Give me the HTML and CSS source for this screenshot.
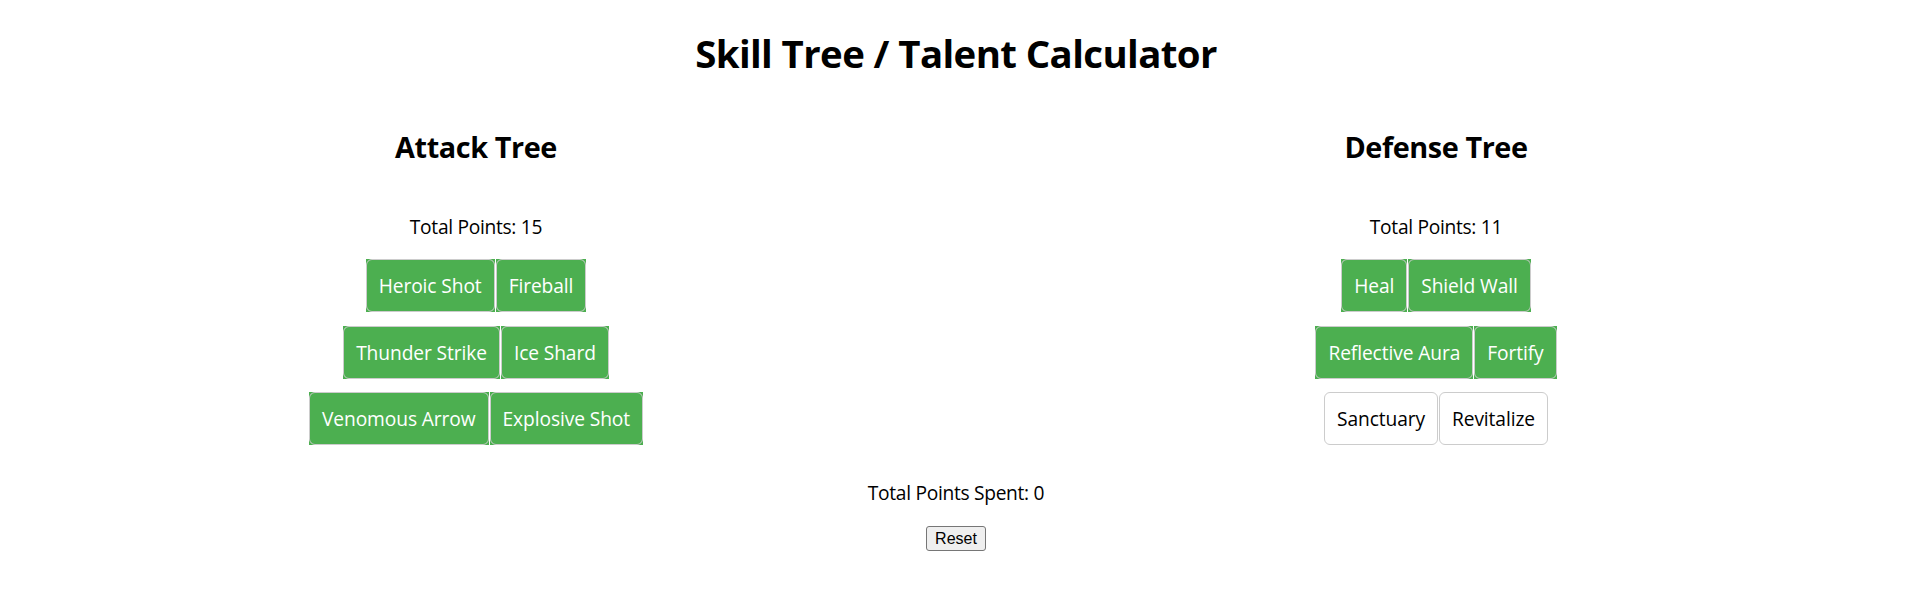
FILE: index.html
```html
<!DOCTYPE html>
<html lang="en">
<head>
<meta charset="utf-8">
<title>Skill Tree / Talent Calculator</title>
<link rel="stylesheet" href="styles.css">
</head>
<body>
<div class="app">
  <h1 class="title">Skill Tree / Talent Calculator</h1>
  <div class="trees">
    <section class="tree">
      <h2 class="tree-title">Attack Tree</h2>
      <p class="points">Total Points: 15</p>
      <div class="rows">
        <div class="row">
          <span class="skill unlocked"><button class="skill-btn">Heroic Shot</button></span>
          <span class="skill unlocked"><button class="skill-btn">Fireball</button></span>
        </div>
        <div class="row">
          <span class="skill unlocked"><button class="skill-btn">Thunder Strike</button></span>
          <span class="skill unlocked"><button class="skill-btn">Ice Shard</button></span>
        </div>
        <div class="row">
          <span class="skill unlocked"><button class="skill-btn">Venomous Arrow</button></span>
          <span class="skill unlocked"><button class="skill-btn">Explosive Shot</button></span>
        </div>
      </div>
    </section>
    <section class="tree">
      <h2 class="tree-title">Defense Tree</h2>
      <p class="points">Total Points: 11</p>
      <div class="rows">
        <div class="row">
          <span class="skill unlocked"><button class="skill-btn">Heal</button></span>
          <span class="skill unlocked"><button class="skill-btn">Shield Wall</button></span>
        </div>
        <div class="row">
          <span class="skill unlocked"><button class="skill-btn">Reflective Aura</button></span>
          <span class="skill unlocked"><button class="skill-btn">Fortify</button></span>
        </div>
        <div class="row">
          <span class="skill locked"><button class="skill-btn">Sanctuary</button></span>
          <span class="skill locked"><button class="skill-btn">Revitalize</button></span>
        </div>
      </div>
    </section>
  </div>
  <p class="spent">Total Points Spent: 0</p>
  <div class="actions"><button class="reset">Reset</button></div>
</div>
</body>
</html>
```
FILE: styles.css
```css
html, body {
  margin: 0;
  padding: 0;
  background: #ffffff;
}

body {
  font-family: "Open Sans", "Noto Sans", sans-serif;
  color: #000000;
}

.app {
  padding: 30px 8px 0;
  text-align: center;
}

.title {
  margin: 0;
  font-size: 38.4px;
  line-height: 46px;
  font-weight: 700;
  letter-spacing: -0.6px;
}

.trees {
  display: grid;
  grid-template-columns: 1fr 1fr;
  column-gap: 24px;
  margin-top: 53px;
}

.tree {
  display: flex;
  flex-direction: column;
  align-items: center;
}

.tree-title {
  margin: 0;
  font-size: 28.8px;
  line-height: 36px;
  font-weight: 700;
  letter-spacing: -0.4px;
}

.points {
  margin: 48.5px 0 0;
  font-size: 19.2px;
  line-height: 26px;
  letter-spacing: -0.3px;
}

.rows {
  margin-top: 19.8px;
  display: flex;
  flex-direction: column;
  gap: 13.5px;
  align-items: center;
}

.row {
  display: flex;
  justify-content: center;
  gap: 1px;
}

.skill {
  display: flex;
}

.skill.unlocked {
  background: #4caf50;
}

.skill-btn {
  margin: 0;
  font-family: inherit;
  font-size: 19.2px;
  line-height: 27px;
  letter-spacing: -0.1px;
  padding: 12px;
  border: 1px solid #cccccc;
  border-radius: 6px;
  cursor: pointer;
}

.unlocked .skill-btn {
  background: transparent;
  color: #ffffff;
}

.locked .skill-btn {
  background: #ffffff;
  color: #000000;
}

.spent {
  margin: 35px 0 0;
  font-size: 19.2px;
  line-height: 26px;
  letter-spacing: -0.3px;
}

.actions {
  margin-top: 20px;
  display: flex;
  justify-content: center;
}

.reset {
  height: 25px;
  box-sizing: border-box;
  padding: 0 8.5px;
  font-family: "Liberation Sans", Arial, sans-serif;
  font-size: 16px;
  color: #000000;
  background: #efefef;
  border: 1px solid #767676;
  border-radius: 3px;
}
```
